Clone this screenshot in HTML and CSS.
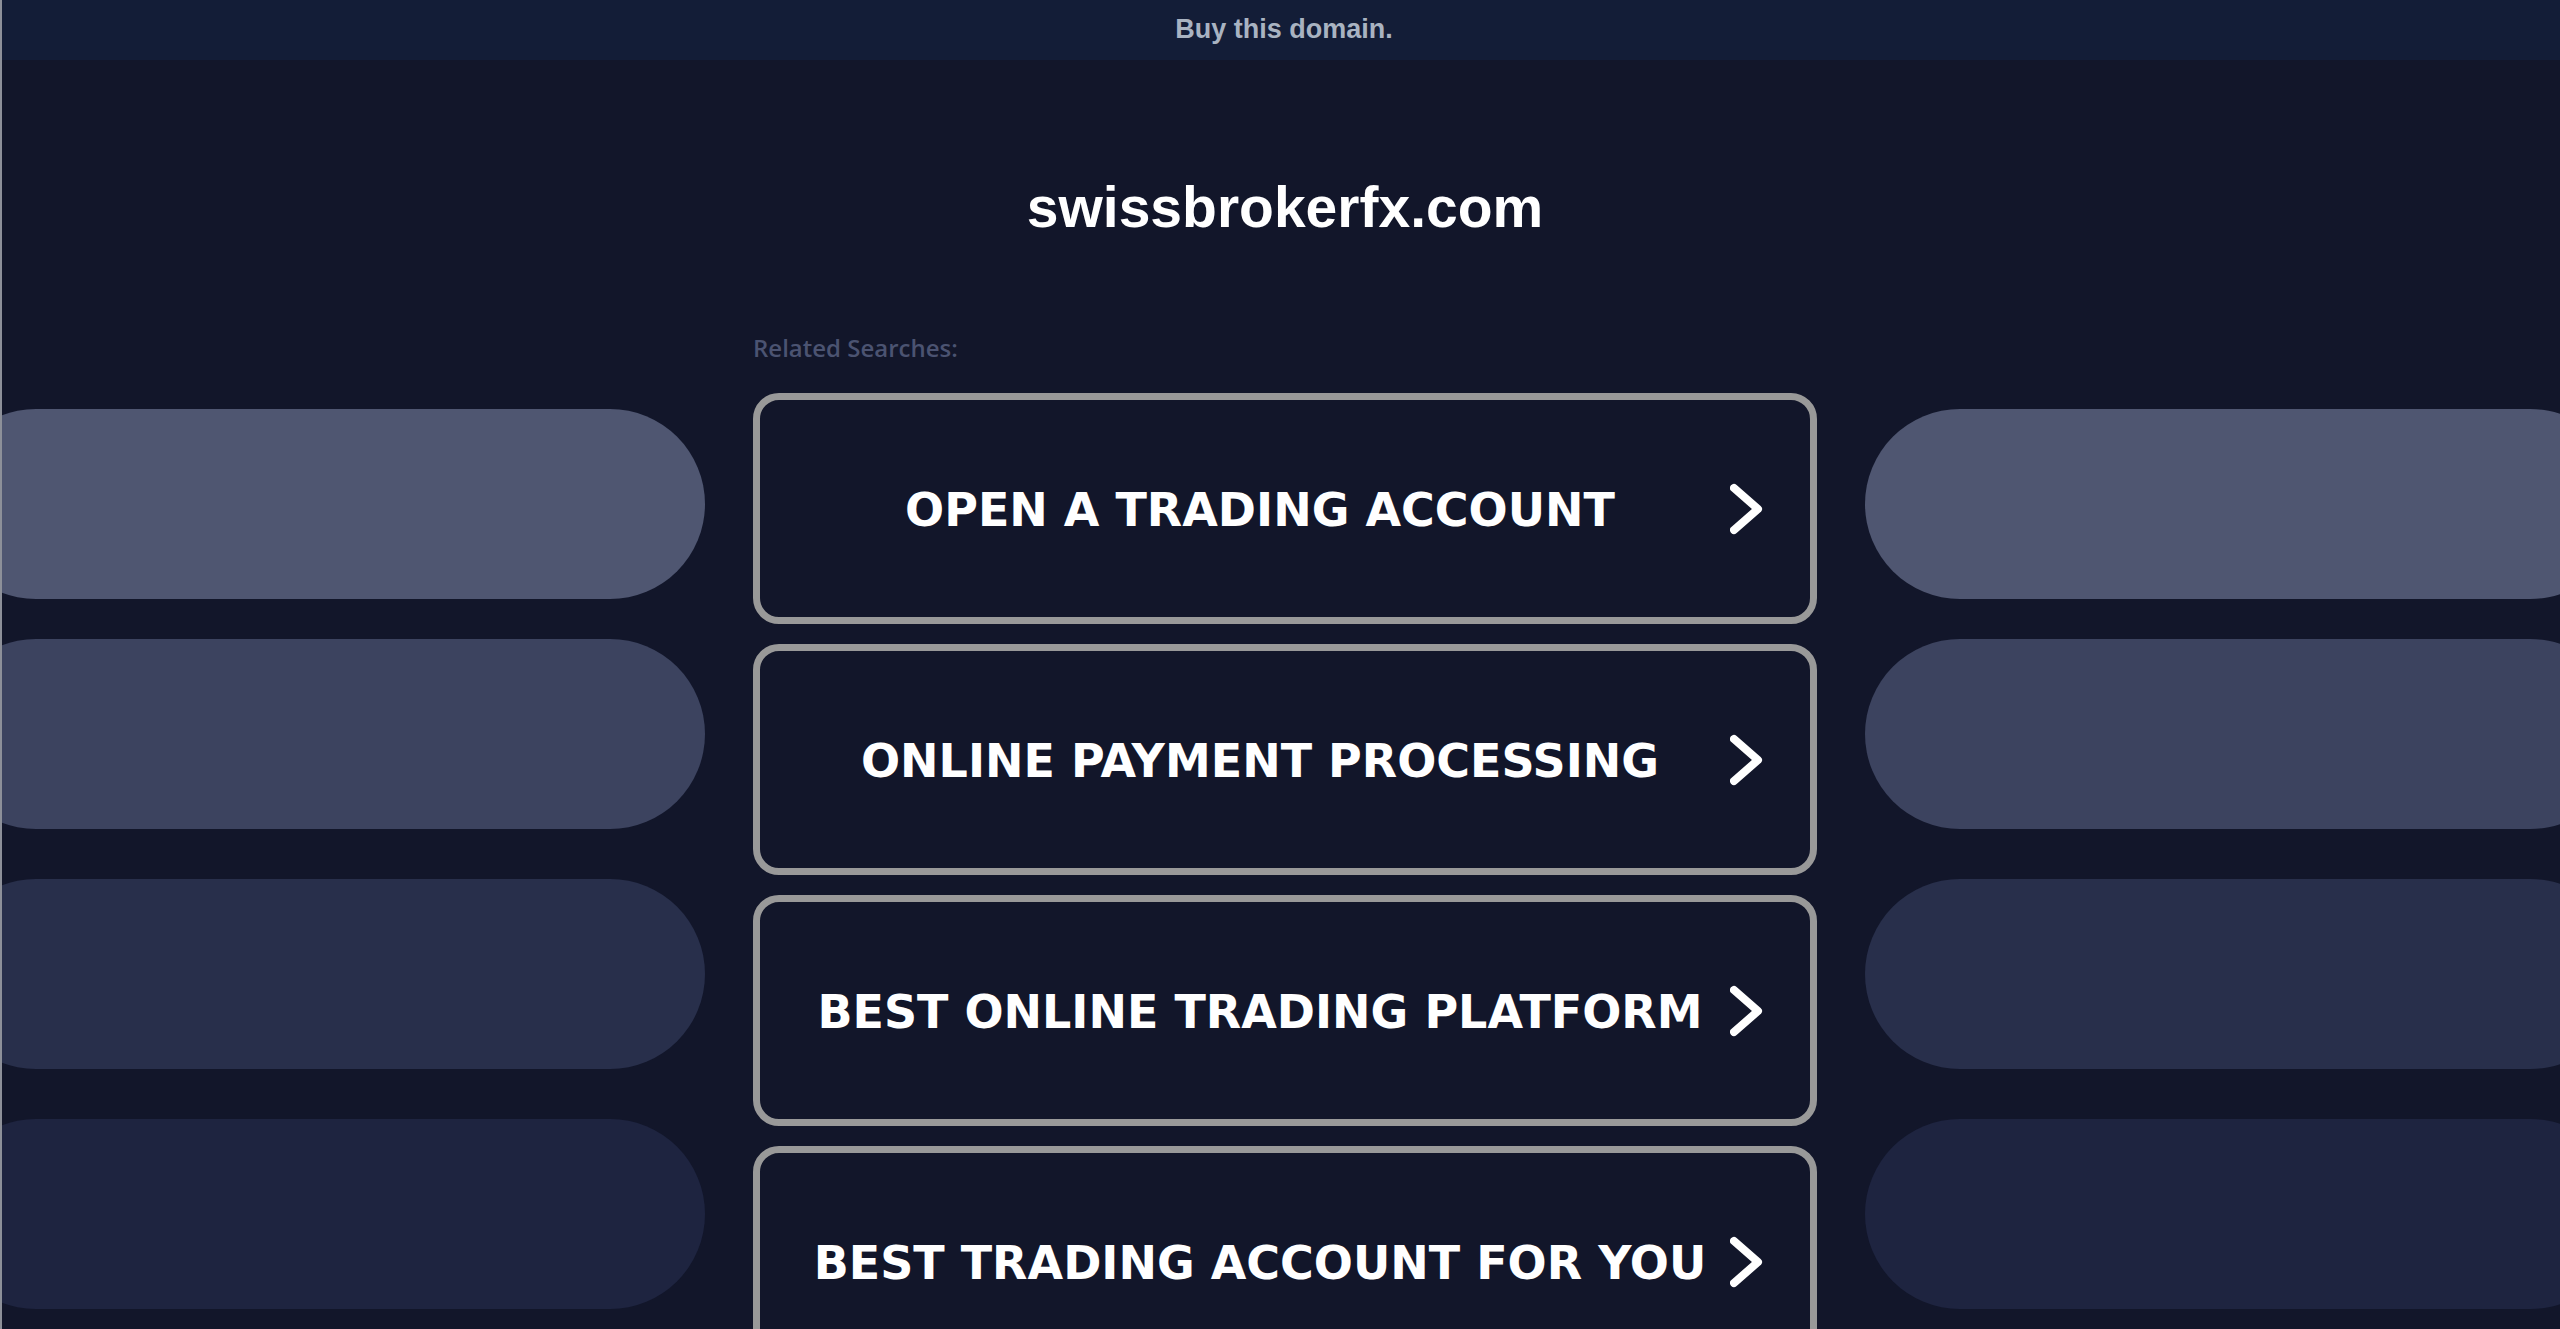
FILE: index.html
```html
<!DOCTYPE html>
<html lang="en">
<head>
    <meta charset="UTF-8">
    <meta name="viewport" content="width=device-width, initial-scale=1.0">
    <title>swissbrokerfx.com</title>
    <link rel="stylesheet" href="styles.css">
</head>
<body>
    <div class="topbar">
        <a href="#" class="buy-link">Buy this domain.</a>
    </div>

    <div class="page">
        <div class="side side-left">
            <div class="pill pill-1"></div>
            <div class="pill pill-2"></div>
            <div class="pill pill-3"></div>
            <div class="pill pill-4"></div>
        </div>

        <div class="content">
            <h1 class="domain">swissbrokerfx.com</h1>
            <p class="related-title">Related Searches:</p>

            <a href="#" class="search-link">
                <span class="search-text">OPEN A TRADING ACCOUNT</span>
                <svg class="chevron" viewBox="0 0 50 60" width="50" height="60"><polyline points="4,9 28,30 4,51"/></svg>
            </a>
            <a href="#" class="search-link">
                <span class="search-text">ONLINE PAYMENT PROCESSING</span>
                <svg class="chevron" viewBox="0 0 50 60" width="50" height="60"><polyline points="4,9 28,30 4,51"/></svg>
            </a>
            <a href="#" class="search-link">
                <span class="search-text">BEST ONLINE TRADING PLATFORM</span>
                <svg class="chevron" viewBox="0 0 50 60" width="50" height="60"><polyline points="4,9 28,30 4,51"/></svg>
            </a>
            <a href="#" class="search-link">
                <span class="search-text">BEST TRADING ACCOUNT FOR YOU</span>
                <svg class="chevron" viewBox="0 0 50 60" width="50" height="60"><polyline points="4,9 28,30 4,51"/></svg>
            </a>
        </div>

        <div class="side side-right">
            <div class="pill pill-1"></div>
            <div class="pill pill-2"></div>
            <div class="pill pill-3"></div>
            <div class="pill pill-4"></div>
        </div>
    </div>
</body>
</html>
```

FILE: styles.css
```css
html, body {
    overflow: hidden;
}

body {
    margin: 0;
    min-height: 100vh;
    background-color: #12162a;
    border-left: 2px solid #8d9099;
    font-family: "Liberation Sans", Arial, sans-serif;
}

.topbar {
    height: 60px;
    background-color: #131d37;
    text-align: center;
}

.buy-link {
    display: inline-block;
    margin-left: 6px;
    line-height: 58px;
    font-size: 27px;
    font-weight: bold;
    color: #a9b3c1;
    text-decoration: none;
}

.page {
    display: grid;
    grid-template-columns: 703px 1064px 1fr;
    column-gap: 48px;
    overflow: hidden;
}

/* decorative pills on both sides */
.side {
    padding-top: 349px;
}

.pill {
    height: 190px;
    border-radius: 95px;
}

.pill + .pill {
    margin-top: 50px;
}

.pill:nth-child(2) {
    margin-top: 40px;
}

.side-left .pill {
    width: 764px;
    margin-left: -61px;
}

.side-right .pill {
    width: 760px;
}

.pill-1 { background-color: #4f5671; }
.pill-2 { background-color: #3c435f; }
.pill-3 { background-color: #282f4b; }
.pill-4 { background-color: #1e2440; }

.content {
    display: flex;
    flex-direction: column;
}

.domain {
    margin: 115px 0 0;
    font-size: 57px;
    line-height: 65px;
    font-weight: bold;
    color: #fff;
    text-align: center;
}

.related-title {
    margin: 92px 0 29px;
    font-family: "Open Sans", sans-serif;
    font-size: 24px;
    font-weight: 600;
    line-height: 32px;
    color: #4b5371;
}

.search-link {
    display: flex;
    align-items: center;
    box-sizing: border-box;
    height: 231px;
    margin-bottom: 20px;
    padding: 2px 30px 0;
    border: 7px solid #999;
    border-radius: 26px;
    text-decoration: none;
}

.search-text {
    flex: 1;
    text-align: center;
    font-family: "DejaVu Sans", Verdana, sans-serif;
    font-size: 46px;
    font-weight: bold;
    color: #fff;
    white-space: nowrap;
}

.chevron {
    flex: none;
    margin-top: -2px;
    fill: none;
    stroke: #fff;
    stroke-width: 8;
    stroke-linecap: round;
    stroke-linejoin: round;
}
```
